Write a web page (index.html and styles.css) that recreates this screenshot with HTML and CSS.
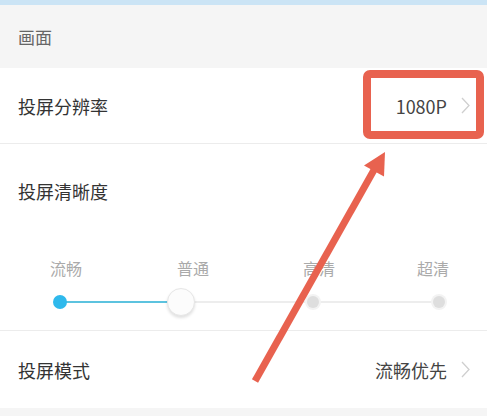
FILE: index.html
```html
<!DOCTYPE html>
<html lang="zh">
<head>
<meta charset="utf-8">
<link rel="stylesheet" href="styles.css">
</head>
<body>
<div class="page">
  <div class="topbar"></div>
  <div class="section-head">画面</div>
  <div class="row">
    <span class="row-title">投屏分辨率</span>
    <span class="row-value">1080P
      <svg class="chev" width="9" height="17" viewBox="0 0 9 17"><path d="M1 1 L8 8.5 L1 16" fill="none" stroke="#cfcfcf" stroke-width="1.3"/></svg>
    </span>
  </div>
  <div class="clarity">
    <div class="row-title">投屏清晰度</div>
    <div class="labels"><span>流畅</span><span>普通</span><span>高清</span><span>超清</span></div>
    <div class="track">
      <span class="dot active"></span>
      <span class="knob"></span>
      <span class="dot"></span>
      <span class="dot"></span>
    </div>
  </div>
  <div class="row last">
    <span class="row-title">投屏模式</span>
    <span class="row-value">流畅优先
      <svg class="chev" width="9" height="17" viewBox="0 0 9 17"><path d="M1 1 L8 8.5 L1 16" fill="none" stroke="#cfcfcf" stroke-width="1.3"/></svg>
    </span>
  </div>
  <svg class="annot" width="487" height="416" viewBox="0 0 487 416">
    <rect x="367" y="74" width="113" height="61" rx="3" fill="none" stroke="#e8624f" stroke-width="8"/>
    <line x1="255" y1="381" x2="374" y2="170" stroke="#e8624f" stroke-width="7"/>
    <polygon points="385,152 364,165.5 384,176.5" fill="#e8624f"/>
  </svg>
</div>
</body>
</html>
```
FILE: styles.css
```css
* { box-sizing: border-box; }
html, body { margin: 0; padding: 0; }
body {
  background: #f5f5f5;
  font-family: "Noto Sans CJK SC", "Noto Sans", sans-serif;
  width: 487px;
  height: 416px;
  overflow: hidden;
}
.page { position: relative; width: 487px; height: 416px; }
.topbar { height: 5px; background: #cbe4f5; }
.section-head {
  height: 63px;
  display: flex;
  align-items: center;
  padding-left: 18px;
  font-size: 17px;
  color: #666;
  background: #f5f5f5;
}
.row {
  height: 76px;
  background: #fff;
  border-bottom: 1px solid #ececec;
  display: flex;
  align-items: center;
  justify-content: space-between;
  padding: 0 17px 0 18px;
}
.row.last { height: 77px; border-bottom: none; }
.row-title { font-size: 18px; color: #333; line-height: 26px; }
.row-value {
  display: flex;
  align-items: center;
  gap: 14px;
  font-size: 18px;
  color: #444;
}
.chev { display: block; }
.clarity {
  background: #fff;
  border-bottom: 1px solid #ececec;
  padding: 34px 0 13px 18px;
}
.labels {
  margin-top: 53px;
  display: flex;
  padding-left: 32px;
  font-size: 16px;
  line-height: 22px;
  color: #aaa;
}
.labels span:nth-child(2) { margin-left: 95px; }
.labels span:nth-child(3) { margin-left: 94px; }
.labels span:nth-child(4) { margin-left: 82px; }
.track {
  margin: 8px 0 0 35px;
  width: 392px;
  height: 30px;
  display: flex;
  align-items: center;
  background:
    linear-gradient(#5cc3df, #5cc3df) no-repeat 7px center / 110px 2px,
    linear-gradient(#ededed, #ededed) no-repeat 7px center / 379px 2px;
}
.dot {
  flex: none;
  width: 12px;
  height: 12px;
  border-radius: 50%;
  background: #dedede;
  box-shadow: 0 0 0 2px #f3f3f3;
}
.knob + .dot { margin-left: 112px; }
.dot + .dot { margin-left: 114px; }
.dot.active {
  width: 14px;
  height: 14px;
  background: #2fb9ec;
  box-shadow: none;
}
.knob {
  flex: none;
  width: 28px;
  height: 28px;
  border-radius: 50%;
  background: #fcfcfc;
  border: 1px solid #e6e6e6;
  box-shadow: 0 2px 3px rgba(0, 0, 0, 0.12);
  margin-left: 100px;
}
.annot { position: absolute; left: 0; top: 0; pointer-events: none; }
```
